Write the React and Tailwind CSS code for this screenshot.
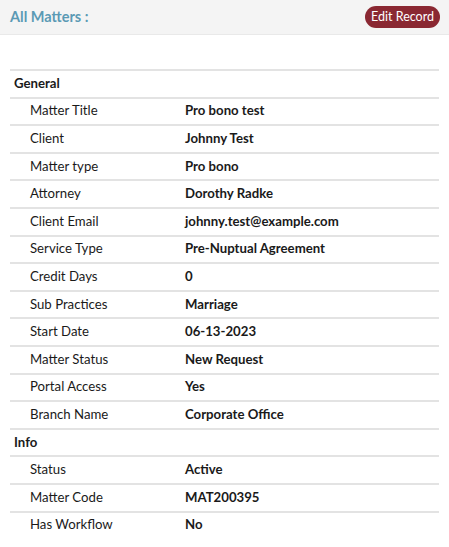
export default function App() {
  const sections = [
    {
      title: "General",
      rows: [
        ["Matter Title", "Pro bono test"],
        ["Client", "Johnny Test"],
        ["Matter type", "Pro bono"],
        ["Attorney", "Dorothy Radke"],
        ["Client Email", "johnny.test@example.com"],
        ["Service Type", "Pre-Nuptual Agreement"],
        ["Credit Days", "0"],
        ["Sub Practices", "Marriage"],
        ["Start Date", "06-13-2023"],
        ["Matter Status", "New Request"],
        ["Portal Access", "Yes"],
        ["Branch Name", "Corporate Office"],
      ],
    },
    {
      title: "Info",
      rows: [
        ["Status", "Active"],
        ["Matter Code", "MAT200395"],
        ["Has Workflow", "No"],
      ],
    },
  ];
  return (
    <div className="w-[449px] h-[547px] bg-white font-['Lato',sans-serif] text-[#1a1a1a] overflow-hidden">
      <div className="h-[35px] bg-[#f4f4f4] border-b border-[#e9e9e9] flex items-center justify-between pl-[10px] pr-[9px]">
        <span className="text-[14.5px] font-bold text-[#5b9ab4]">All Matters :</span>
        <button className="h-[22px] px-[6px] rounded-full bg-[#8a2832] text-white text-[12.5px] leading-none flex items-center">
          Edit Record
        </button>
      </div>
      <div className="mx-[10px] mt-[34px]">
        {sections.map((s) => (
          <div key={s.title}>
            <div className="h-[27.6px] border-t-2 border-[#e3e3e3] flex items-center pl-[4px] text-[13.2px] font-bold">
              {s.title}
            </div>
            {s.rows.map(([k, v]) => (
              <div key={k} className="h-[27.6px] border-t-2 border-[#e3e3e3] flex items-center text-[13.2px]">
                <div className="w-[175px] pl-[20px] shrink-0">{k}</div>
                <div className="font-bold">{v}</div>
              </div>
            ))}
          </div>
        ))}
      </div>
    </div>
  );
}
